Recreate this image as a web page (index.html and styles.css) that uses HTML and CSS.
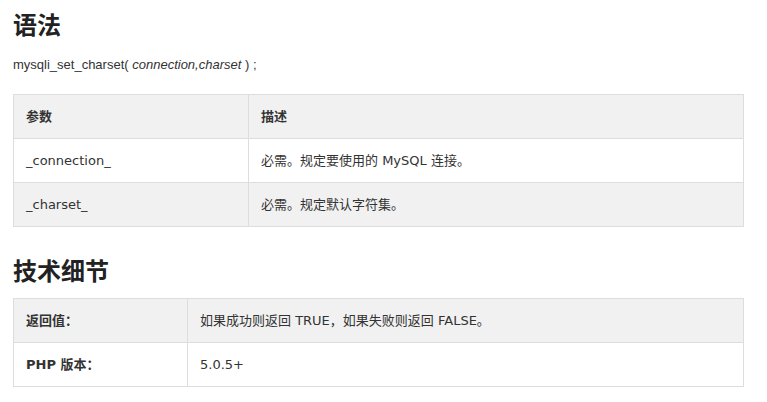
FILE: index.html
```html
<!DOCTYPE html>
<html lang="zh-CN">
<head>
<meta charset="utf-8">
<link rel="stylesheet" href="styles.css">
</head>
<body>
<div class="page">
  <h2 class="title">语法</h2>
  <p class="code">mysqli_set_charset( <i>connection,charset</i> ) ;</p>
  <table class="ref ref-params">
    <tr class="head"><th class="c1">参数</th><th>描述</th></tr>
    <tr class="odd"><td class="c1">_connection_</td><td>必需。规定要使用的 MySQL 连接。</td></tr>
    <tr class="even"><td class="c1">_charset_</td><td>必需。规定默认字符集。</td></tr>
  </table>
  <h2 class="title title2">技术细节</h2>
  <table class="ref ref-tech">
    <tr class="even"><th class="c1">返回值：</th><td>如果成功则返回 TRUE，如果失败则返回 FALSE。</td></tr>
    <tr class="odd"><th class="c1">PHP 版本：</th><td>5.0.5+</td></tr>
  </table>
</div>
</body>
</html>
```

FILE: styles.css
```css
html, body {
  margin: 0;
  padding: 0;
  background: #fff;
}
.page {
  padding: 0 23px 0 13px;
  color: #333;
  font-family: Verdana, "DejaVu Sans", "Noto Sans CJK SC", sans-serif;
}
.title {
  margin: 0;
  padding-top: 9px;
  font-size: 24px;
  line-height: 30px;
  font-weight: bold;
  color: #222;
  font-family: "Noto Sans CJK SC", sans-serif;
}
.title2 {
  padding-top: 28px;
}
.code {
  margin: 18px 0 0;
  font-family: "Liberation Sans", Arial, "Noto Sans CJK SC", sans-serif;
  font-size: 13px;
  line-height: 16px;
  color: #333;
}
.code i {
  font-style: italic;
}
.ref {
  width: 731px;
  border-collapse: collapse;
  border: 1px solid #ddd;
  font-size: 13px;
  margin-top: 21px;
}
.ref-tech {
  margin-top: 13px;
}
.ref th, .ref td {
  border: 1px solid #ddd;
  height: 43px;
  padding: 0 12px;
  text-align: left;
  vertical-align: middle;
  line-height: 18px;
}
.ref th {
  font-weight: bold;
}
.ref .head, .ref .even {
  background: #f1f1f1;
}
.ref .odd {
  background: #fff;
}
.ref-params .c1 {
  width: 210px;
}
.ref-tech .c1 {
  width: 149px;
}
```
